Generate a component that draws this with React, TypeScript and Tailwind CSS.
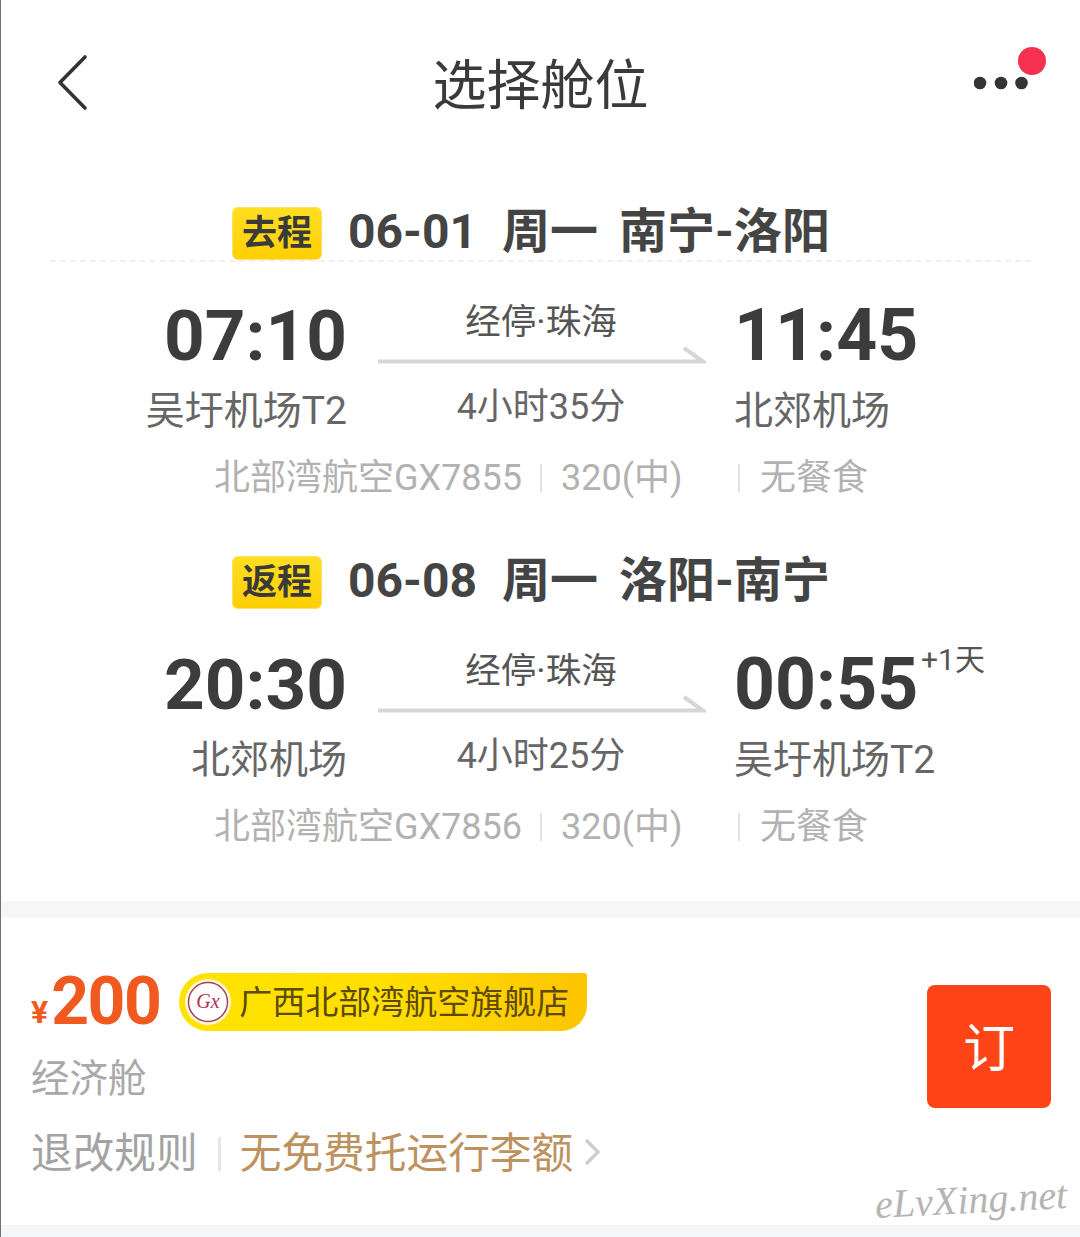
const font = { fontFamily: 'Roboto, "Noto Sans CJK SC", sans-serif' }

type Leg = {
  tag: string
  date: string
  week: string
  route: string
  depart: string
  arrive: string
  from: string
  to: string
  duration: string
  flight: string
  nextDay?: boolean
  dashed?: boolean
}

const legs: Leg[] = [
  {
    tag: "去程",
    date: "06-01",
    week: "周一",
    route: "南宁-洛阳",
    depart: "07:10",
    arrive: "11:45",
    from: "吴圩机场T2",
    to: "北郊机场",
    duration: "4小时35分",
    flight: "北部湾航空GX7855",
    dashed: true,
  },
  {
    tag: "返程",
    date: "06-08",
    week: "周一",
    route: "洛阳-南宁",
    depart: "20:30",
    arrive: "00:55",
    from: "北郊机场",
    to: "吴圩机场T2",
    duration: "4小时25分",
    flight: "北部湾航空GX7856",
    nextDay: true,
  },
]

function LegBlock({ leg }: { leg: Leg }) {
  return (
    <section className="h-[349px]">
      <div className={`mx-[49px] h-[59px] pl-[182px] ${leg.dashed ? "border-b-2 border-dashed border-[#f0f0f0]" : ""}`}>
        <div className="flex items-center h-[57px] text-[48px] leading-none font-bold text-[#444]">
          <span className="w-[90px] h-[53px] mt-[3px] flex items-center justify-center rounded-[6px] border border-[#fbe06a] bg-gradient-to-b from-[#ffdf20] to-[#fdcf00] text-[35px] text-[#3a3a3a]">
            {leg.tag}
          </span>
          <span className="ml-[26px] w-[154px]">{leg.date}</span>
          <span className="w-[117px]">{leg.week}</span>
          <span>{leg.route}</span>
        </div>
      </div>

      <div className="mt-[36px] flex">
        <div className="w-[346px] text-right">
          <div className="h-[72px] text-[71px] leading-[75px] font-bold text-[#3c3c3c]">{leg.depart}</div>
          <div className="mt-[16px] h-[50px] text-[39px] leading-[50px] text-[#666]">{leg.from}</div>
        </div>
        <div className="ml-[31px] w-[327px] text-center">
          <div className="h-[46px] pr-[1px] text-[35.5px] leading-[48px] text-[#555]">经停·珠海</div>
          <svg className="mt-[1px] block" width="328" height="20" viewBox="0 0 328 20" fill="none">
            <path d="M0 16.5H325L306 3" stroke="#d5d7d7" strokeWidth="4" />
          </svg>
          <div className="mt-[18px] h-[46px] pr-[1px] text-[36px] leading-[48px] text-[#666]">{leg.duration}</div>
        </div>
        <div className="ml-[29px]">
          <div className="relative h-[72px] text-[71.5px] leading-[75px] font-bold text-[#3c3c3c]">
            {leg.arrive}
            {leg.nextDay && (
              <span className="absolute left-[187px] top-[-5px] text-[30px] leading-[36px] font-normal whitespace-nowrap text-[#555]">
                +1天
              </span>
            )}
          </div>
          <div className="mt-[16px] h-[50px] text-[39px] leading-[50px] text-[#666]">{leg.to}</div>
        </div>
      </div>

      <div className="mt-[17px] flex items-center h-[50px] pl-[213px] text-[36px] leading-[50px] text-[#b2b2b2]">
        <div className="w-[524px] flex items-center">
          <span>{leg.flight}</span>
          <span className="ml-[18px] w-[2px] h-[28px] bg-[#e2e2e2]" />
          <span className="ml-[19px]">320(中)</span>
        </div>
        <span className="w-[2px] h-[28px] bg-[#e2e2e2]" />
        <span className="ml-[20px]">无餐食</span>
      </div>
    </section>
  )
}

export default function App() {
  return (
    <div
      className="relative w-[1080px] h-[1237px] overflow-hidden bg-white border-l border-[#707070]"
      style={font}
    >
      {/* Nav bar */}
      <header className="relative h-[203px]">
        <div className="flex items-start justify-between pt-[51px] pl-[54px] pr-[32px]">
          <svg width="36" height="62" viewBox="0 0 36 62" fill="none">
            <path d="M30 6L5 31.5L30 57" stroke="#333" strokeWidth="3.6" strokeLinecap="round" strokeLinejoin="round" />
          </svg>
          <svg className="mt-[-5px]" width="74" height="50" viewBox="0 0 74 50">
            <circle cx="6" cy="37" r="6.3" fill="#333" />
            <circle cx="27" cy="37" r="6.3" fill="#333" />
            <circle cx="47.5" cy="37" r="6.3" fill="#333" />
            <circle cx="58" cy="15" r="14" fill="#f6304f" />
          </svg>
        </div>
        <h1 className="absolute inset-x-0 top-[52px] text-center text-[54px] leading-[70px] font-normal text-[#3a3a3a]">
          选择舱位
        </h1>
      </header>

      {legs.map((leg) => (
        <LegBlock key={leg.tag} leg={leg} />
      ))}

      <div className="h-[17px] bg-[#f5f6f8]" />

      {/* Fare row */}
      <div className="flex justify-between h-[307px] pl-[30px] pr-[29px]">
        <div className="pt-[54px]">
          <div className="flex items-center h-[60px]">
            <span className="mt-[20px] text-[32px] leading-none font-bold text-[#f0591f]">¥</span>
            <span className="ml-[3px] text-[66px] leading-[60px] font-bold tracking-[-1.5px] text-[#f0591f]">200</span>
            <div className="ml-[19px] flex items-center w-[408px] h-[58px] rounded-tl-[29px] rounded-bl-[29px] rounded-tr-[3px] rounded-br-[26px] bg-gradient-to-r from-[#ffe300] via-[#ffdf00] to-[#fdc500]">
              <svg className="ml-[6px] shrink-0" width="46" height="46" viewBox="0 0 46 46">
                <circle cx="23" cy="23" r="23" fill="#fff8d8" />
                <circle cx="23" cy="23" r="19.5" fill="#fff" stroke="#a8425c" strokeWidth="1.5" />
                <text x="23" y="29" textAnchor="middle" fontSize="20" fontStyle="italic" fontFamily="Liberation Serif" fill="#b2304f">
                  Gx
                </text>
              </svg>
              <span className="ml-[8px] text-[33px] leading-none text-[#5d4a08]">广西北部湾航空旗舰店</span>
            </div>
          </div>
          <div className="mt-[22px] h-[50px] text-[38.5px] leading-[50px] text-[#a9a9a9]">经济舱</div>
          <div className="mt-[25px] flex items-center h-[50px] text-[41.7px] leading-[50px]">
            <span className="text-[#a3a3a3]">退改规则</span>
            <span className="ml-[20px] w-[3px] h-[34px] bg-[#e4e6ea]" />
            <span className="ml-[19px] text-[#bd9260]">无免费托运行李额</span>
            <svg className="ml-[10px] mt-[-4px]" width="18" height="30" viewBox="0 0 18 30" fill="none">
              <path d="M3 3L15 15L3 27" stroke="#c9cdd5" strokeWidth="3.5" />
            </svg>
          </div>
        </div>
        <button className="mt-[67px] w-[124px] h-[123px] rounded-[8px] bg-[#ff4517] pt-[7px] text-[52px] leading-none text-white">
          订
        </button>
      </div>

      <div className="h-[12px] bg-[#f5f6f8]" />

      {/* Watermark */}
      <span className="absolute left-[874px] top-[1178px] -rotate-3 text-[40px] leading-[44px] italic text-[#b4b4b4] whitespace-nowrap font-['Liberation_Serif',serif]">
        eLvXing.net
      </span>
    </div>
  )
}
